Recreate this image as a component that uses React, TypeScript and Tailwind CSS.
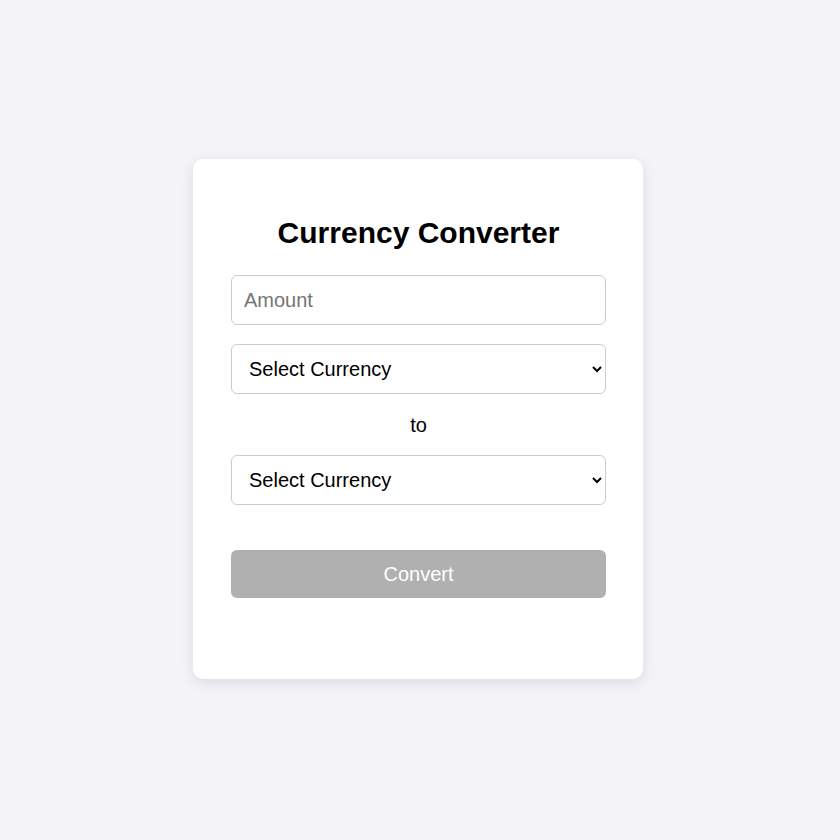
import { useState } from "react";

const currencies = ["USD", "EUR", "GBP", "JPY", "INR", "AUD", "CAD"];

const App = () => {
    const [amount, setAmount] = useState("");
    const [from, setFrom] = useState("");
    const [to, setTo] = useState("");

    const ready = amount !== "" && from !== "" && to !== "";

    return (
        <div className="min-h-screen w-full bg-[#f4f4f8] flex justify-center pr-[4px] pt-[159px] font-['Liberation_Sans',Arial,sans-serif] text-black">
            <div className="w-[450px] h-[520px] bg-white rounded-[10px] shadow-[0_4px_14px_rgba(0,0,0,0.1)] pl-[38px] pr-[37px] pt-[56px]">
                <h2 className="text-[30px] leading-[35px] font-bold text-center mb-[25px]">Currency Converter</h2>

                <input
                    type="number"
                    placeholder="Amount"
                    value={amount}
                    onChange={(e) => setAmount(e.target.value)}
                    className="block w-full h-[50px] px-3 text-[20px] border border-[#cccccc] rounded-[6px] outline-none placeholder:text-[#757575]"
                />

                <select
                    value={from}
                    onChange={(e) => setFrom(e.target.value)}
                    className="block w-full h-[50px] mt-[19px] pl-[13px] pr-3 text-[20px] border border-[#cccccc] rounded-[6px] bg-white outline-none"
                >
                    <option value="">Select Currency</option>
                    {currencies.map((c) => (
                        <option key={c} value={c}>{c}</option>
                    ))}
                </select>

                <p className="text-center text-[20px] leading-[23px] mt-[20px] mb-[18px]">to</p>

                <select
                    value={to}
                    onChange={(e) => setTo(e.target.value)}
                    className="block w-full h-[50px] pl-[13px] pr-3 text-[20px] border border-[#cccccc] rounded-[6px] bg-white outline-none"
                >
                    <option value="">Select Currency</option>
                    {currencies.map((c) => (
                        <option key={c} value={c}>{c}</option>
                    ))}
                </select>

                <button
                    disabled={!ready}
                    className={`block w-full h-[48px] mt-[45px] rounded-[6px] text-white text-[20px] ${ready ? "bg-[#007bff]" : "bg-[#b0b0b0]"}`}
                >
                    Convert
                </button>
            </div>
        </div>
    );
};

export default App;
